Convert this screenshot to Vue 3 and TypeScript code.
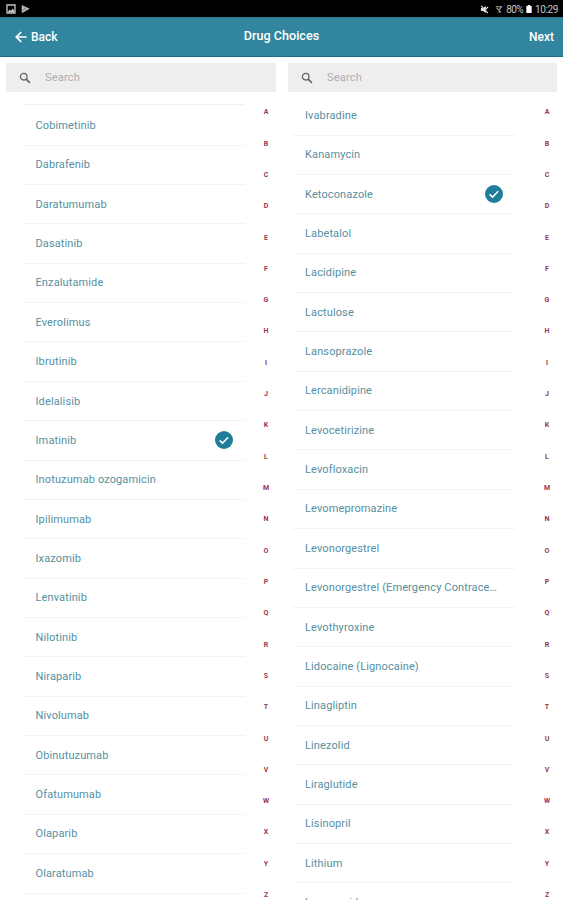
<script setup lang="ts">
interface Column {
  id: string
  drugs: string[]
  selected: string
}

const columns: Column[] = [
  {
    id: 'left',
    selected: 'Imatinib',
    drugs: [
      'Cobimetinib', 'Dabrafenib', 'Daratumumab', 'Dasatinib', 'Enzalutamide',
      'Everolimus', 'Ibrutinib', 'Idelalisib', 'Imatinib', 'Inotuzumab ozogamicin',
      'Ipilimumab', 'Ixazomib', 'Lenvatinib', 'Nilotinib', 'Niraparib',
      'Nivolumab', 'Obinutuzumab', 'Ofatumumab', 'Olaparib', 'Olaratumab',
    ],
  },
  {
    id: 'right',
    selected: 'Ketoconazole',
    drugs: [
      'Ivabradine', 'Kanamycin', 'Ketoconazole', 'Labetalol', 'Lacidipine',
      'Lactulose', 'Lansoprazole', 'Lercanidipine', 'Levocetirizine', 'Levofloxacin',
      'Levomepromazine', 'Levonorgestrel', 'Levonorgestrel (Emergency Contrace…',
      'Levothyroxine', 'Lidocaine (Lignocaine)', 'Linagliptin', 'Linezolid',
      'Liraglutide', 'Lisinopril', 'Lithium', 'Loperamide',
    ],
  },
]

const letters: string[] = 'ABCDEFGHIJKLMNOPQRSTUVWXYZ'.split('')
</script>

<template>
  <div class="screen">
    <div class="status">
      <div class="status-group">
        <svg class="photo" viewBox="0 0 12 12">
          <path d="M1.2 1.2h9.6v9.6H1.2z" fill="none" stroke="#c4c4c4" stroke-width="1.6" />
          <path d="M2 9.8l2.4-3.3 1.7 1.7 2.1-2.9L10 8v2z" fill="#c4c4c4" />
        </svg>
        <svg class="play" viewBox="0 0 12 12">
          <path d="M1 .6l10.6 5.2L1 11.6z" fill="#bdbdbd" />
          <path d="M3.8 3.6l3.6 3.6M1.2 8.3l4-2.5" stroke="#555" stroke-width=".8" />
        </svg>
      </div>
      <div class="status-group">
        <svg class="mute" viewBox="0 0 10 10">
          <path d="M1 3.2h2.3L6.5 1v8L3.3 6.7H1z" fill="#dedede" />
          <path d="M1.3 1l7.5 8M6.2 4.9L9 2" stroke="#dedede" stroke-width="1.3" />
        </svg>
        <svg class="signal" viewBox="0 0 10 10">
          <path d="M1 1.5h8M8 2L5.2 5v4M2 3l5.5 5.5" fill="none" stroke="#a9a9a9" stroke-width="1.3" />
        </svg>
        <span class="percent">80%</span>
        <svg class="battery" viewBox="0 0 6 9">
          <path d="M1.6 0h2.8v1H6v8H0V1h1.6z" fill="#fff" />
        </svg>
        <span class="clock">10:29</span>
      </div>
    </div>

    <header class="bar">
      <button class="nav back">
        <svg class="arrow" viewBox="0 0 12 12">
          <path d="M11.6 6H1.4M6.2 1.1L1.2 6l5 4.9" fill="none" stroke="#fff" stroke-width="1.7" />
        </svg>
        <span>Back</span>
      </button>
      <h1 class="title">Drug Choices</h1>
      <button class="nav next">Next</button>
    </header>

    <main class="columns">
      <section v-for="col in columns" :key="col.id" class="column" :class="col.id">
        <div class="search">
          <svg class="glass" viewBox="0 0 12 12">
            <circle cx="4.7" cy="4.7" r="3.3" fill="none" stroke="#666" stroke-width="1.3" />
            <path d="M7.2 7.2l3.7 3.7" stroke="#666" stroke-width="1.7" />
          </svg>
          <span>Search</span>
        </div>
        <div class="body">
          <ul class="list">
            <li v-for="drug in col.drugs" :key="drug" class="row">
              <span class="name">{{ drug }}</span>
              <svg v-if="drug === col.selected" class="check" viewBox="0 0 18 18">
                <circle cx="9" cy="9" r="9" fill="#1f7d99" />
                <path d="M4.7 9.4l2.8 2.7 5.7-5.8" fill="none" stroke="#fff" stroke-width="1.5" />
              </svg>
            </li>
          </ul>
          <div class="index">
            <span v-for="letter in letters" :key="letter" class="letter">{{ letter }}</span>
          </div>
        </div>
      </section>
    </main>
  </div>
</template>

<style>
body {
  margin: 0;
  background: #fff;
}
</style>

<style scoped>
.screen {
  display: flex;
  flex-direction: column;
  width: 563px;
  height: 900px;
  overflow: hidden;
  background: #fff;
  font-family: Roboto, "Liberation Sans", sans-serif;
}
.status {
  display: flex;
  flex: none;
  justify-content: space-between;
  height: 17px;
  padding: 0 5px 0 6px;
  background: #000;
  color: #c6c6c6;
  font-size: 10px;
}
.status-group {
  display: flex;
  align-items: center;
  padding-top: 1px;
}
.photo {
  width: 10px;
  height: 10px;
  margin-right: 5px;
}
.play {
  width: 9px;
  height: 10px;
}
.mute {
  width: 9px;
  height: 9px;
  margin-right: 6px;
}
.signal {
  width: 8px;
  height: 9px;
  margin-right: 3px;
}
.percent {
  letter-spacing: -0.6px;
}
.battery {
  width: 6px;
  height: 8px;
  margin: 0 3px;
}
.clock {
  letter-spacing: -0.4px;
}
.bar {
  display: grid;
  flex: none;
  grid-template-columns: 1fr auto 1fr;
  align-items: center;
  box-sizing: border-box;
  height: 40px;
  padding: 0 9px 0 15px;
  border-top: 1px solid #27758c;
  border-bottom: 1px solid #19718a;
  background: #31859e;
  color: #fff;
}
.nav {
  display: flex;
  align-items: center;
  padding: 0;
  border: 0;
  background: none;
  color: inherit;
  font: 500 12px/16px Roboto, "Liberation Sans", sans-serif;
}
.back {
  gap: 4px;
}
.next {
  justify-self: end;
}
.arrow {
  width: 12px;
  height: 12px;
}
.title {
  margin: 0 6px 3px 0;
  font-size: 12.6px;
  font-weight: 500;
  line-height: 16px;
}
.columns {
  display: grid;
  flex: 1;
  grid-template-columns: 282px 281px;
  min-height: 0;
}
.column {
  display: flex;
  flex-direction: column;
  min-width: 0;
  min-height: 0;
  padding: 6px 6px 0;
}
.search {
  display: flex;
  flex: none;
  align-items: center;
  gap: 14px;
  height: 29px;
  padding-left: 13px;
  background: #eee;
  color: #adadad;
  font-size: 11px;
  letter-spacing: 0.2px;
}
.glass {
  width: 12px;
  height: 12px;
}
.body {
  display: flex;
  flex: 1;
  justify-content: space-between;
  min-height: 0;
  overflow: hidden;
}
.list {
  width: 221px;
  margin: 0 0 0 18px;
  padding: 12.4px 0 0;
  list-style: none;
}
.right .list {
  width: 222px;
  margin-left: 5px;
  padding-top: 4.2px;
}
.row {
  display: flex;
  align-items: center;
  justify-content: space-between;
  box-sizing: border-box;
  height: 39.37px;
  padding: 0 12px;
  border-bottom: 1px solid #f3f3f3;
  color: #568fa1;
  font-size: 11px;
  letter-spacing: 0.12px;
}
.left .row {
  padding-left: 11.5px;
}
.left .row:first-child {
  height: 41.3px;
  padding-top: 1px;
  border-top: 1px solid #f1f1f1;
}
.name {
  white-space: nowrap;
}
.check {
  flex: none;
  width: 18px;
  height: 18px;
}
.index {
  display: flex;
  flex-direction: column;
  width: 20px;
  padding-top: 5.3px;
}
.letter {
  flex: none;
  height: 31.32px;
  color: #963652;
  font-size: 7px;
  font-weight: 700;
  line-height: 31.32px;
  text-align: center;
}
</style>
